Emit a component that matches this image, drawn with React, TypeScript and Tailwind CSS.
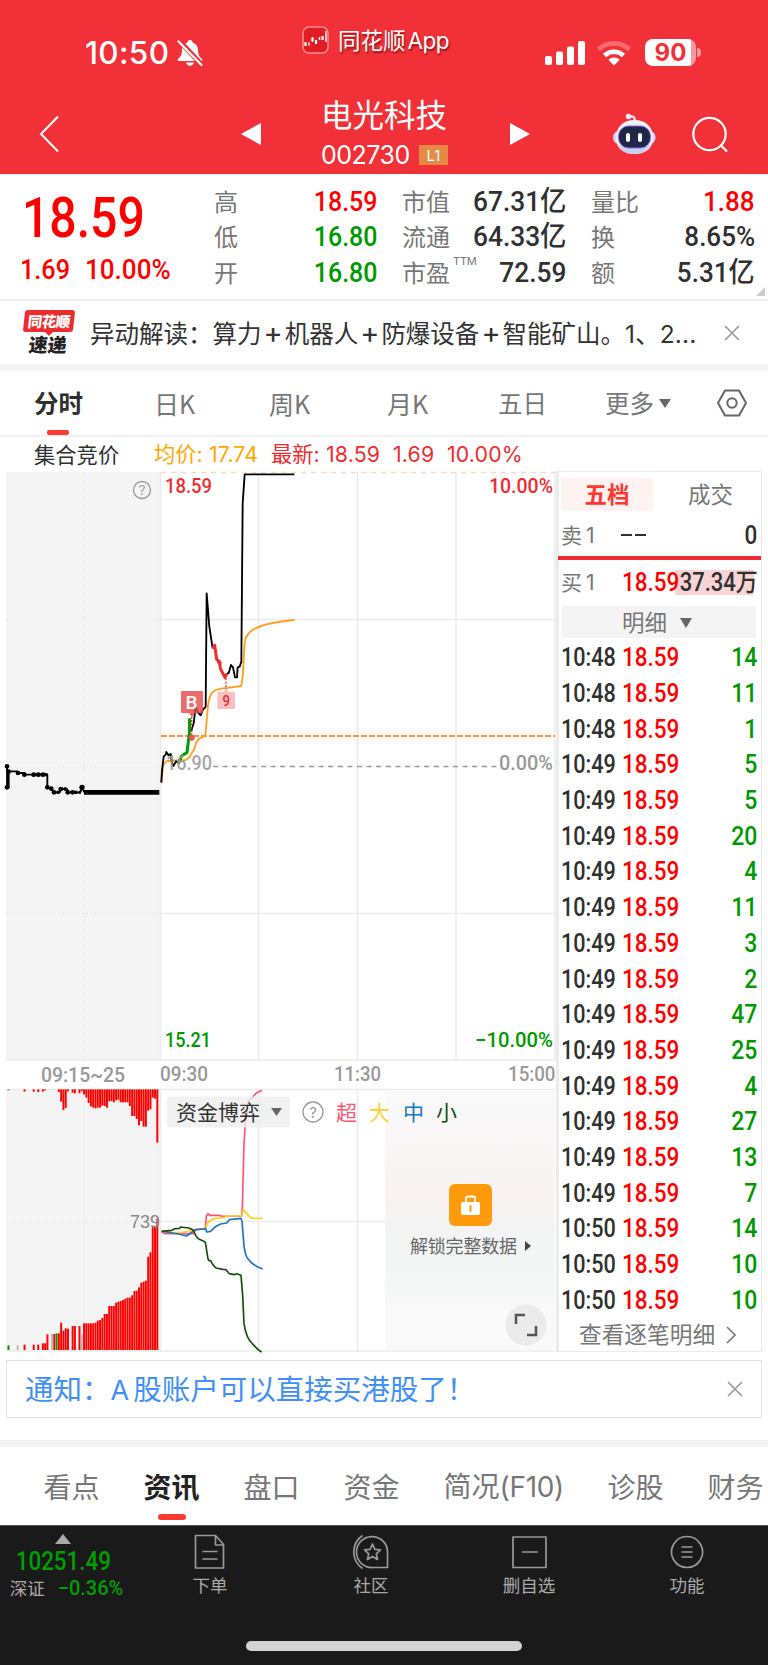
import { clsx } from "clsx";

const dinFont = "font-['Roboto','Noto_Sans_CJK_SC',sans-serif] font-medium";

const quoteColumns = [
  {
    className: "ml-[214px] w-[163px]",
    scale: "scale-x-[0.89]",
    rows: [
      { label: "高", value: "18.59", color: "text-[#ff0000]" },
      { label: "低", value: "16.80", color: "text-[#009900]" },
      { label: "开", value: "16.80", color: "text-[#009900]" },
    ],
  },
  {
    className: "ml-[25px] w-[164px]",
    scale: "scale-x-[0.94]",
    rows: [
      { label: "市值", value: "67.31亿", color: "text-[#303030]" },
      { label: "流通", value: "64.33亿", color: "text-[#303030]" },
      { label: "市盈", sup: "TTM", value: "72.59", color: "text-[#303030]" },
    ],
  },
  {
    className: "ml-[25px] w-[164px]",
    scale: "scale-x-[0.93]",
    rows: [
      { label: "量比", value: "1.88", color: "text-[#ff0000]" },
      { label: "换", value: "8.65%", color: "text-[#303030]" },
      { label: "额", value: "5.31亿", color: "text-[#303030]" },
    ],
  },
];

const trades = [
  ["10:48", 14], ["10:48", 11], ["10:48", 1], ["10:49", 5], ["10:49", 5],
  ["10:49", 20], ["10:49", 4], ["10:49", 11], ["10:49", 3], ["10:49", 2],
  ["10:49", 47], ["10:49", 25], ["10:49", 4], ["10:49", 27], ["10:49", 13],
  ["10:49", 7], ["10:50", 14], ["10:50", 10], ["10:50", 10],
];

// Call auction volume, one slot per bar (66 slots)
const unmatched = [
  3, 0, 0, 0, 0, 0, 0, 7, 0, 0, 0, 7, 0, 8, 0, 7, 3, 0, 0, 0, 0, 0, 8, 37, 62, 56, 6, 0, 10, 12, 0, 12, 5,
  15, 25, 41, 51, 55, 57, 55, 55, 49, 50, 55, 36, 35, 39, 33, 31, 39, 39, 39, 39, 50, 80, 80, 89, 108, 95,
  112, 112, 64, 60, 25, 28, 160,
];
const matched = [
  14, 0, 0, 0, 14, 0, 0, 16, 0, 0, 0, 16, 0, 16, 0, 20, 20, 47, 0, 48, 48, 50, 50, 82, 58, 65, 64, 0, 72, 72, 0, 72, 47,
  80, 80, 80, 80, 80, 82, 88, 90, 96, 108, 108, 132, 132, 132, 142, 145, 147, 150, 154, 157, 157, 164, 177, 178, 188,
  202, 205, 208, 280, 293, 372, 372, 395,
];
const matchedColor: Record<number, string> = { 0: "#009900", 4: "#bbbbbb", 19: "#bbbbbb", 21: "#009900", 32: "#bbbbbb" };

const StatusBar = () => (
  <div className="relative flex h-[90px] items-center pt-[15px] text-white">
    <span className="ml-[85px] w-[84px] font-['Inter'] text-[31.500px] leading-none font-medium tracking-[0.3px]">10:50</span>
    <svg className="ml-[7px]" width="28" height="28" viewBox="0 0 28 28" fill="#fff">
      <path d="M14 1c-1.6 0-2.5 1-2.7 2.4C8 4.500 6 7.300 6 11c0 5.500-2.200 7.400-4 9-.8.800-.4 2 .8 2h22.400c1.200 0 1.600-1.200.8-2-1.800-1.600-4-3.500-4-9 0-3.700-2-6.500-5.300-7.600C16.500 2 15.600 1 14 1z" />
      <path d="M10 23.500h8c-.5 2-2 3.200-4 3.200s-3.500-1.200-4-3.200z" />
      <path d="M3 1.500 26 26" stroke="#f23037" strokeWidth="5" />
      <path d="M2.500 2.500 25.500 26" stroke="#fff" strokeWidth="2.200" strokeLinecap="round" />
    </svg>
    <div className="absolute top-[26px] left-[302px] flex items-center">
      <svg width="27" height="28" viewBox="0 0 27 28" fill="none">
        <rect x="1" y="1" width="25" height="26" rx="6" fill="#e11d23" stroke="#f9898d" strokeWidth="1.500" />
        <path d="M3.500 16v4M10.500 12v3M14 14v4M20.500 10v4" stroke="#fff" strokeWidth="2.200" />
        <path d="M7 16.500v3M10.500 11v5M17.500 11v3M24 5v11" stroke="#fff" strokeWidth="1.400" />
      </svg>
      <span className="ml-[9px] font-['Noto_Sans_CJK_SC',sans-serif] text-[22.500px] leading-none [text-shadow:1px_2px_2px_rgba(80,0,0,0.6)]">
        同花顺 <span className="-ml-[3px] font-['Inter'] tracking-[-0.5px]">App</span>
      </span>
    </div>
    <svg className="ml-[341px]" width="40" height="24" viewBox="0 0 40 24" fill="#fff">
      <rect x="0" y="15" width="7" height="9" rx="2" />
      <rect x="11" y="10.500" width="7" height="13.500" rx="2" />
      <rect x="22" y="5.500" width="7" height="18.500" rx="2" />
      <rect x="33" y="0" width="7" height="24" rx="2" />
    </svg>
    <svg className="ml-[12px]" width="34" height="26" viewBox="0 0 34 26" fill="none" stroke="#fff" strokeWidth="4.600">
      <path d="M1.600 9.500a22.500 22.500 0 0 1 30.800 0" stroke="#f96a70" />
      <path d="M7.500 15.500a14 14 0 0 1 19 0" />
      <path d="M17 25.500 11.300 19.800a8.300 8.300 0 0 1 11.400 0z" fill="#fff" stroke="none" />
    </svg>
    <div className="ml-[14px] flex items-center">
      <div className="flex h-[27px] w-[51px] items-center justify-center rounded-[8px] bg-[linear-gradient(90deg,#fff_46px,#fa989b_46px)] font-['Inter'] text-[24px] leading-none font-bold text-[#f23037]">
        90
      </div>
      <div className="ml-[1px] h-[9px] w-[4px] rounded-r-full bg-[#fa989b]" />
    </div>
  </div>
);

const Robot = () => (
  <svg width="44" height="42" viewBox="0 0 44 42" fill="none">
    <path d="M16.500 4c4-1.500 6.500-.5 6.500 4" stroke="#e4e4fa" strokeWidth="2.200" />
    <circle cx="16.500" cy="3.500" r="2.800" fill="#e8e8fa" />
    <rect x="1" y="18" width="42.500" height="13" rx="6" fill="#d3d4f5" />
    <path d="M22.500 7C34 7 41 14 41 25c0 10-7 16-18.500 16S4 35 4 25C4 14 11 7 22.500 7z" fill="#f0f0fb" />
    <path d="M6 31c4 8 9.500 10 16.500 10S35 39 39 31c-6 5-27 6-33 0z" fill="#cdcfee" />
    <rect x="6.500" y="13" width="32" height="22" rx="10" fill="#1f2747" stroke="#8d63f2" strokeWidth="1" />
    <rect x="14" y="20" width="4" height="9" rx="2" fill="#fff" />
    <rect x="26" y="20" width="4" height="9" rx="2" fill="#fff" />
  </svg>
);

const Header = () => (
  <div className="flex h-[84px] items-center pt-[4px] text-white">
    <svg className="ml-[39px]" width="20" height="38" viewBox="0 0 20 38" fill="none" stroke="#fff" strokeWidth="2">
      <path d="M19 1.500 2 19l17 17.500" />
    </svg>
    <svg className="ml-[182px]" width="20" height="22" viewBox="0 0 20 22" fill="#fff">
      <path d="M20 0v22L0 11z" />
    </svg>
    <div className="ml-[60px] flex w-[129px] flex-col">
      <span className="-mt-[5px] text-[31.500px] leading-[34px] whitespace-nowrap">电光科技</span>
      <div className="mt-[13px] flex items-center">
        <span className="w-[89px] font-['Inter'] text-[25px] leading-none tracking-[-0.5px]">002730</span>
        <span className="ml-[9px] flex h-[20px] w-[29px] items-center justify-center bg-[#e48a45] font-['Inter'] text-[15px] leading-none">
          L1
        </span>
      </div>
    </div>
    <svg className="ml-[60px]" width="20" height="22" viewBox="0 0 20 22" fill="#fff">
      <path d="M0 0v22l20-11z" />
    </svg>
    <div className="ml-[82px] flex">
      <Robot />
    </div>
    <svg className="ml-[36px]" width="37" height="37" viewBox="0 0 37 37" fill="none" stroke="#fff" strokeWidth="2.200">
      <circle cx="17.500" cy="18" r="16.200" />
      <path d="m28.500 29 6.500 6.500" />
    </svg>
  </div>
);

const QuoteSummary = () => (
  <div className="relative flex h-[127px] shrink-0 border-b-2 border-[#f0f0f0] bg-white">
    <div className={clsx("absolute top-[14px] left-[22px] text-[#ff0000]", dinFont)}>
      <div className="origin-left scale-x-[0.86] text-[56px] leading-[60px]">18.59</div>
      <div className="mt-[6px] flex text-[28px] leading-[32px]">
        <span className="-ml-[2px] inline-block w-[65px] origin-left scale-x-[0.9]">1.69</span>
        <span className="inline-block origin-left scale-x-[0.93]">10.00%</span>
      </div>
    </div>
    {quoteColumns.map((column) => (
      <div key={column.rows[0].label} className={clsx("flex flex-col pt-[10px]", column.className)}>
        {column.rows.map((row) => (
          <div key={row.label} className="flex h-[35.5px] items-center justify-between">
            <span className="-mt-[2px] flex text-[24px] leading-none whitespace-nowrap text-[#777]">
              {row.label}
              {row.sup && (
                <sup className="relative top-[1px] left-[3px] h-0 font-['Inter'] text-[11px] tracking-[-0.2px]">{row.sup}</sup>
              )}
            </span>
            <span
              className={clsx("origin-right text-[28px] leading-none whitespace-nowrap", dinFont, column.scale, row.color)}
            >
              {row.value}
            </span>
          </div>
        ))}
      </div>
    ))}
    <svg className="absolute right-[3px] bottom-[3px]" width="9" height="9" viewBox="0 0 9 9">
      <path d="M9 0v9H0z" fill="#ccc" />
    </svg>
  </div>
);

const CloseIcon = () => (
  <svg width="16" height="16" viewBox="0 0 16 16" stroke="#999" strokeWidth="1.600">
    <path d="m1 1 14 14M15 1 1 15" />
  </svg>
);

const NewsFlash = () => (
  <div className="flex h-[70px] shrink-0 items-center border-b-[7px] border-[#f4f4f4] bg-white pr-[28px] pl-[22px]">
    <div className="-mt-[2px] flex w-[53px] flex-col items-center">
      <div className="flex h-[22px] w-[50px] -skew-x-6 items-center justify-center rounded-[3px] bg-[#ee2c2f] text-[14.500px] leading-none font-black tracking-[-0.5px] text-white">
        同花顺
      </div>
      <svg width="8" height="4" viewBox="0 0 8 4">
        <path d="M0 0h8L4 4z" fill="#ee2c2f" />
      </svg>
      <div className="-mt-[2px] -skew-x-6 text-[19px] leading-[19px] font-black text-[#222]">速递</div>
    </div>
    <span className="ml-[15px] w-[608px] text-[24.500px] leading-none whitespace-nowrap text-[#333]">
      异动解读：算力<Plus />机器人<Plus />防爆设备<Plus />智能矿山。<Digits>1</Digits>、<Digits>2...</Digits>
    </span>
    <div className="ml-auto">
      <CloseIcon />
    </div>
  </div>
);

const Plus = () => <span className="mx-[2px] inline-block font-['Inter'] text-[29px] leading-none">+</span>;

const PeriodTabs = () => (
  <div className="relative flex h-[66px] shrink-0 items-center border-b-2 border-[#f2f2f2] pl-[34px] text-[24.500px] leading-none text-[#777]">
    <span className="w-[120px] font-bold text-[#303030]">分时</span>
    <span className="w-[115px] text-[25px]">日K</span>
    <span className="w-[118px] text-[25px]">周K</span>
    <span className="w-[111px] text-[25px]">月K</span>
    <span className="w-[107px]">五日</span>
    <span className="flex w-[112px] items-center">
      更多
      <svg className="ml-[5px]" width="12" height="9" viewBox="0 0 12 9">
        <path d="M0 0h12L6 9z" fill="#666" />
      </svg>
    </span>
    <svg width="30" height="28" viewBox="0 0 30 28" fill="none" stroke="#666" strokeWidth="2">
      <path d="M8 1.500h14L29 14l-7 12.500H8L1 14z" strokeLinejoin="round" />
      <circle cx="15" cy="14" r="4.700" />
    </svg>
    <div className="absolute bottom-0 left-[47px] h-[5px] w-[22px] rounded-[2px] bg-[#ff3830]" />
  </div>
);

const PriceLegend = () => (
  <div className="flex h-[34px] shrink-0 items-center pl-[34px] text-[21.300px] leading-none whitespace-nowrap">
    <span className="w-[120px] text-[#303030]">集合竞价</span>
    <span className="w-[117px] text-[#ffa800]">
      均价<Digits>: 17.74</Digits>
    </span>
    <span className="w-[122px] text-[#ee2c2f]">
      最新<Digits>: 18.59</Digits>
    </span>
    <span className="w-[54px] text-[#ee2c2f]"><Digits>1.69</Digits></span>
    <span className="text-[#ee2c2f]"><Digits>10.00%</Digits></span>
  </div>
);

const Digits = ({ children }: { children: React.ReactNode }) => (
  <span className="font-['Inter'] tracking-[0.15px]">{children}</span>
);

const Chart = () => (
  <svg
    className="block shrink-0 overflow-visible font-['Roboto','Noto_Sans_CJK_SC',sans-serif] font-medium"
    width="556"
    height="881"
    viewBox="0 471 556 881"
    fill="none"
  >
    <defs>
      <linearGradient id="lock" x1="0" y1="1090" x2="0" y2="1352" gradientUnits="userSpaceOnUse">
        <stop offset="0" stopColor="#f9f9f9" />
        <stop offset=".25" stopColor="#f9f6f6" />
        <stop offset=".42" stopColor="#f9f2f2" />
        <stop offset=".52" stopColor="#f3f3f3" />
        <stop offset=".66" stopColor="#f2f6f4" />
        <stop offset=".85" stopColor="#f8f9f8" />
        <stop offset="1" stopColor="#f9f9f9" />
      </linearGradient>
    </defs>
    <rect x="6" y="472" width="154" height="588" fill="#f4f4f4" />
    <rect x="6" y="1089" width="154" height="262" fill="#f4f4f4" />

    {/* grid */}
    <g stroke="#ebebeb" strokeWidth="1.500">
      <path d="M160.500 472v588M258.500 472v588M357.500 472v588M456 472v588M555 472v588M160 619.500h395M160 913.500h395M6 1060h549" />
      <path d="M6 1089.500h549M160.500 1089v262M258.500 1089v262M357.500 1089v262M160 1221.500h395M6 1351h549" />
      <path d="M84 472v588M84 1089v262M6 619.500h154M6 767.500h154M6 913.500h154M6 1221.500h154" strokeDasharray="2 2" />
    </g>
    <path d="M161 472.500h394" stroke="#f0dcc8" strokeWidth="1.500" strokeDasharray="5 5" />

    {/* call auction price */}
    <g transform="translate(0 740) scale(.33333)" stroke="#000" strokeWidth="5.500" strokeLinejoin="round">
      <path d="M21 78v65h5V94h26l4 5h17v5h69v38l10 4 10 11h17l5-10h17l4 10h36l5-15 7 15" />
      <path d="M158 157h20M180 147h21M200 157h42M98 104h44" strokeWidth="10" strokeDasharray="8 4" />
      <path d="M252 157h226" strokeWidth="14" />
      <g fill="#000" stroke="none">
        <circle cx="21" cy="79" r="7" /><circle cx="21" cy="142" r="7" /><circle cx="26" cy="95" r="7" />
        <circle cx="54" cy="99" r="7" /><circle cx="73" cy="104" r="7" /><circle cx="101" cy="104" r="7" />
        <circle cx="115" cy="104" r="7" /><circle cx="129" cy="104" r="7" /><circle cx="142" cy="142" r="7" />
        <circle cx="154" cy="146" r="7" /><circle cx="162" cy="157" r="7" /><circle cx="182" cy="147" r="7" />
        <circle cx="203" cy="157" r="7" /><circle cx="218" cy="157" r="7" /><circle cx="246" cy="142" r="8" />
      </g>
    </g>

    {/* reference lines */}
    <path d="M161 736h394" stroke="#ff9340" strokeWidth="2" strokeDasharray="6 2" />
    <path d="M213 766.500h284" stroke="#999" strokeWidth="1.300" strokeDasharray="5 4.600" />

    {/* average and price */}
    <g transform="translate(150 460) scale(.33333)" strokeWidth="5.500" strokeLinejoin="round">
      <path
        d="M34 968 40 915l10-12 57-3 11-8 7-12 8-12 5-20 10-12 18-9 6-68q2-42 12-58 8-12 30-15l60-8 5-38 4-80q2-30 12-38 8-12 28-20 30-14 110-22"
        stroke="#ffa020"
      />
      <path d="m34 968 2-38 5-40 7-8 1-6 6 10 7-4 3 22 5 14 8-14 9 6M123 815l8-25 6-50 7 18 8 8 7-18 7-6 1-3 3-339 8 100 10 65M230 640h6l7-25 6 7 6 30h6l2-30 6-2 5-15 4-475 6-87h149" stroke="#000" />
      <path d="m85 912 10-24 12-8 4-2 7-58 1-45" stroke="#009d00" strokeWidth="9" />
      <path d="m188 565 6-9 6 42 8 7 3 20 14 28 5-12M201 606h9v10" stroke="#ee2c2f" strokeWidth="9" />
      <path d="M228 655v35M125 760v65" stroke="#ee2c2f" strokeWidth="4" strokeDasharray="6 4" />
      <path d="M96 693h60q3 0 3 3v60q0 3-3 3h-21l-9 12-9-12H96q-3 0-3-3v-60q0-3 3-3z" fill="#e84c4c" fillOpacity=".82" />
      <circle cx="125" cy="833" r="9" fill="#f05050" />
      <path d="M205 695h16l7-10 7 10h17q3 0 3 3v46q0 3-3 3h-47q-3 0-3-3v-46q0-3 3-3z" fill="#f9bfc1" />
    </g>
    <text x="185.500" y="708.500" fontSize="18.500" textLength="12" lengthAdjust="spacingAndGlyphs" fill="#fff">B</text>
    <text x="222.500" y="706" fontSize="15" textLength="7.500" lengthAdjust="spacingAndGlyphs" fill="#ee2c2f">9</text>

    {/* axis labels */}
    <g fontSize="20">
      <text x="165" y="493" textLength="47" lengthAdjust="spacingAndGlyphs" fill="#ee2c2f">18.59</text>
      <text x="489" y="493" textLength="64" lengthAdjust="spacingAndGlyphs" fill="#ee2c2f">10.00%</text>
      <text x="166" y="770" textLength="46" lengthAdjust="spacingAndGlyphs" fill="#999" fillOpacity=".9">16.90</text>
      <text x="499" y="770" textLength="54" lengthAdjust="spacingAndGlyphs" fill="#999">0.00%</text>
      <text x="165" y="1047" textLength="46" lengthAdjust="spacingAndGlyphs" fill="#009900">15.21</text>
      <text x="475" y="1047" textLength="78" lengthAdjust="spacingAndGlyphs" fill="#009900">−10.00%</text>
      <g fill="#999">
        <text x="41" y="1082" textLength="84" lengthAdjust="spacingAndGlyphs">09:15~25</text>
        <text x="160" y="1081" textLength="48" lengthAdjust="spacingAndGlyphs">09:30</text>
        <text x="334" y="1081" textLength="47" lengthAdjust="spacingAndGlyphs">11:30</text>
        <text x="508" y="1081" textLength="47.500" lengthAdjust="spacingAndGlyphs">15:00</text>
      </g>
    </g>
    <circle cx="142" cy="490" r="8.500" stroke="#999" strokeWidth="1.300" />
    <text x="142" y="495" fontSize="13" textAnchor="middle" fill="#999" className="font-['Inter'] font-normal">?</text>

    {/* auction volume */}
    <g transform="translate(0 1080) scale(.33333)">
      {unmatched.map((depth, i) => (
        <rect key={i} x={22.5 + i * 6.87} y="28" width="5.900" height={depth} fill={i === 0 ? "#009900" : "#ff0000"} />
      ))}
      {matched.map((height, i) => (
        <rect key={i} x={22.5 + i * 6.87} y={810 - height} width="5.900" height={height} fill={matchedColor[i] ?? "#ff0000"} />
      ))}
    </g>
    <text x="130" y="1228" fontSize="18" textLength="30" fill="#888" className="font-['Liberation_Sans'] font-normal">739</text>

    {/* fund flow */}
    <g transform="translate(0 1020) scale(.33333)" strokeWidth="5" strokeLinejoin="round">
      <path d="m485 636 8 5h88l5-13 30-2 3-38 5-7 5 5h28l8 3 60-1 2-25 5-190 4-65 7-50q2-18 15-26l10-12 18-9" stroke="#ff5570" />
      <path d="m485 634 30 3 30 1 35-8 37-4q5-28 30-31l25-2 10-5 44-1 4-18 9 10q8 13 20 16h29" stroke="#fbd32e" />
      <path d="m485 634 15 2 35 6 25 6 25-18 32-4 3 10 12-2 14-14 16-8 18-3 8-10 35-4 3 8 6 75q4 30 13 40 12 18 43 29" stroke="#1c75c4" />
      <path d="m485 634 30-3 10-5 14-1 3-4 24 3 14 6 8 18 8 9 12 5 8 5q5 30 8 50l3 5h5l8 14 8 8 20 4 10 1 10 12 14 3 8-3 13 5 5 60 4 85q7 45 25 60 18 20 28 25" stroke="#14500c" />
    </g>
    <rect x="385" y="1090" width="170" height="260.500" fill="url(#lock)" />
    <rect x="167" y="1096.500" width="123" height="31" rx="3" fill="#ededed" fillOpacity=".8" />
    <g className="font-normal" fontSize="21">
      <text x="176" y="1120" textLength="84" fill="#303030">资金博弈</text>
      <path d="M271 1108h11l-5.500 8z" fill="#666" />
      <circle cx="313" cy="1112" r="10" stroke="#999" strokeWidth="1.400" />
      <text x="313" y="1118" fontSize="15" textAnchor="middle" fill="#999" className="font-['Inter']">?</text>
      <text x="336" y="1120" fill="#ff5570">超</text>
      <text x="369" y="1120" fill="#fbd32e">大</text>
      <text x="403" y="1120" fill="#1c75c4">中</text>
      <text x="436" y="1120" fill="#14500c">小</text>
    </g>

    {/* locked data */}
    <rect x="449" y="1184" width="43" height="42" rx="6" fill="#ff9a0a" />
    <path d="M466 1202v-3.500q0-2 2-2h5q2 0 2 2v3.500" stroke="#fff" strokeWidth="1.800" />
    <rect x="461" y="1202" width="19" height="13" rx="2" fill="#fff" />
    <path d="M470.500 1206v5" stroke="#ff9a0a" strokeWidth="2" strokeLinecap="round" />
    <text x="410" y="1253" fontSize="18" textLength="107" fill="#666" className="font-normal">解锁完整数据</text>
    <path d="M525 1241v10l6-5z" fill="#444" />
    <circle cx="526" cy="1325" r="20.500" fill="#ebebeb" />
    <path d="M516 1324v-9h9M536 1326v9h-9" stroke="#555" strokeWidth="2.500" />
  </svg>
);

const OrderPanel = () => (
  <div className="flex h-[881px] w-[206px] flex-col border-y border-r border-l-[3px] border-[#ebebeb] bg-white leading-none">
    <div className="mt-[6px] flex h-[33px] items-center pl-[2px]">
      <span className="flex h-[33px] w-[92px] items-center justify-center rounded-[3px] bg-[#fff3f2] pb-[2px] text-[22.500px] font-bold text-[#ff3830]">
        五档
      </span>
      <span className="ml-[35px] pb-[2px] text-[22.500px] text-[#777]">成交</span>
    </div>
    <div className="flex h-[45px] items-center pt-[3px] pr-[4px] pl-[2px]">
      <span className="w-[60px] text-[21px] text-[#777]">卖<span className="ml-[4px] font-['Inter']">1</span></span>
      <span className="flex gap-[3px]">
        <i className="h-[2px] w-[11px] bg-[#303030]" />
        <i className="h-[2px] w-[11px] bg-[#303030]" />
      </span>
      <span className={clsx("ml-auto origin-right scale-x-[0.9] text-[25px] text-[#303030]", dinFont)}>0</span>
    </div>
    <div className="-ml-[1px] h-[4px] bg-[#ee2c2f]" />
    <div className="flex h-[43px] items-center pt-[1px] pr-[2px] pl-[2px]">
      <span className="w-[61px] text-[21px] text-[#777]">买<span className="ml-[4px] font-['Inter']">1</span></span>
      <span className={clsx("w-[53px] origin-left scale-x-[0.9] text-[25px] text-[#ff0000]", dinFont)}>18.59</span>
      <span className="flex h-[25px] w-[83px] items-center justify-end bg-[linear-gradient(90deg,#fad3d4_79px,transparent_79px)]">
        <span className={clsx("origin-right scale-x-[0.88] text-[25px] whitespace-nowrap text-[#303030]", dinFont)}>37.34万</span>
      </span>
    </div>
    <div className="mt-[3px] ml-[2px] flex h-[32px] w-[195px] shrink-0 items-center bg-[#f4f4f4] pb-[2px] pl-[61px] text-[22.500px] text-[#777]">
      明细
      <svg className="mt-[3px] ml-[13px]" width="12" height="10" viewBox="0 0 12 10">
        <path d="M0 0h12L6 10z" fill="#666" />
      </svg>
    </div>
    <div className={clsx("mt-[2px] flex flex-col pr-[4px] pl-[2px] text-[25px]", dinFont)}>
      {trades.map(([time, volume], i) => (
        <div key={i} className="flex h-[35.7px] items-center">
          <span className="w-[61px] origin-left scale-x-[0.865] text-[#303030]">{time}</span>
          <span className="origin-left scale-x-[0.9] text-[#ff0000]">18.59</span>
          <span className="ml-auto origin-right scale-x-[0.92] text-[#009900]">{volume}</span>
        </div>
      ))}
    </div>
    <div className="flex flex-1 items-center pl-[20px] text-[22.700px] text-[#777]">
      查看逐笔明细
      <svg className="ml-[11px]" width="10" height="18" viewBox="0 0 10 18" fill="none" stroke="#777" strokeWidth="1.600">
        <path d="m1 1 8 8-8 8" />
      </svg>
    </div>
  </div>
);

const Notice = () => (
  <div className="mt-[8px] ml-[6px] flex h-[58px] w-[756px] shrink-0 items-center justify-between border-[1.5px] border-[#e2e2e2] pr-[18px] pl-[18px]">
    <span className="text-[28.500px] leading-none text-[#4090f7]">
      通知：<span className="mr-[4px] font-['Inter'] text-[27px]">A</span>股账户可以直接买港股了！
    </span>
    <CloseIcon />
  </div>
);

const SectionTabs = () => (
  <div className="relative mt-[22px] flex h-[85px] shrink-0 items-center overflow-hidden border-t-[7px] border-[#f4f4f4] pb-[1px] pl-[43.5px] text-[28px] leading-none whitespace-nowrap text-[#777]">
    <span className="w-[100px] shrink-0">看点</span>
    <span className="w-[100px] shrink-0 font-bold text-[#222]">资讯</span>
    <span className="w-[100px] shrink-0">盘口</span>
    <span className="w-[100px] shrink-0">资金</span>
    <span className="w-[164px] shrink-0">
      简况<span className="font-['Inter'] tracking-[-0.3px]">(F10)</span>
    </span>
    <span className="w-[100px] shrink-0">诊股</span>
    <span className="shrink-0">财务</span>
    <div className="absolute bottom-[5px] left-[158px] h-[6px] w-[28px] rounded-[3px] bg-[#ff3830]" />
  </div>
);

const navItems = [
  {
    label: "下单",
    className: "left-[160px]",
    icon: <path d="M3.500 1.500h20l8 9v23.500h-28zM23.500 2v9h8M10.500 17.500h15M10.500 25h15" />,
  },
  {
    label: "社区",
    className: "left-[321px]",
    icon: (
      <path d="M34.500 33.500H20A15.500 15.500 0 1 1 34.500 18zM9.500 1.500a20 20 0 0 0 0 33M19.500 10l2.400 5.300 5.600.6-4.200 3.900 1.200 5.700-5-2.900-5 2.900 1.200-5.700-4.200-3.900 5.600-.6z" />
    ),
  },
  { label: "删自选", className: "left-[479px]", icon: <path d="M2 3h33v30.500H2zM11 18h16" /> },
  {
    label: "功能",
    className: "left-[637px]",
    icon: <path d="M18 2.500a15.500 15.500 0 1 0 .1 0zM12.500 13h11M12.500 18h11M12.500 23h11" />,
  },
];

const BottomNav = () => (
  <div className="relative h-[140px] shrink-0 border-t border-[#555] bg-[#1a1a1a]">
    <div className="flex w-[134px] flex-col items-center pt-[8px] leading-none">
      <svg className="mr-[8px]" width="16" height="10" viewBox="0 0 16 10">
        <path d="M8 0l8 10H0z" fill="#aaa" />
      </svg>
      <span className={clsx("mt-[4px] mr-[7px] scale-x-[0.86] text-[26px] text-[#00a000]", dinFont)}>10251.49</span>
      <div className="mt-[4px] -ml-[1px] flex items-center">
        <span className="text-[17.500px] text-[#aaa]">深证</span>
        <span className={clsx("ml-[13px] text-[20px] text-[#00a000]", dinFont)}>−0.36%</span>
      </div>
    </div>
    {navItems.map((item) => (
      <div key={item.label} className={clsx("absolute top-[8px] flex w-[100px] flex-col items-center", item.className)}>
        <svg width="36" height="36" viewBox="0 0 36 36" fill="none" stroke="#999" strokeWidth="1.700" strokeLinejoin="round">
          {item.icon}
        </svg>
        <span className="mt-[6px] text-[17.500px] leading-none text-[#aaa]">{item.label}</span>
      </div>
    ))}
    <div className="absolute bottom-[14px] left-[246px] h-[10px] w-[276px] rounded-full bg-[#d3d3d3]" />
  </div>
);

const App = () => {
  return (
    <div className="flex h-[1665px] w-[768px] flex-col overflow-hidden bg-white font-['Noto_Sans_CJK_SC',sans-serif]">
      <div className="h-[174px] shrink-0 bg-[#f23037]">
        <StatusBar />
        <Header />
      </div>
      <QuoteSummary />
      <NewsFlash />
      <PeriodTabs />
      <PriceLegend />
      <div className="flex shrink-0">
        <Chart />
        <OrderPanel />
      </div>
      <Notice />
      <SectionTabs />
      <BottomNav />
    </div>
  );
};

export default App;
